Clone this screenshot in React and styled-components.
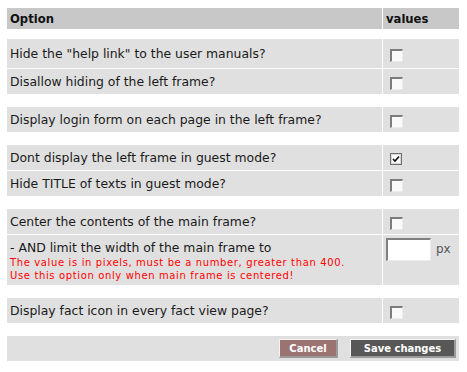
import React from "react";
import styled, { createGlobalStyle } from "styled-components";

const Global = createGlobalStyle`
  html, body { margin: 0; padding: 0; background: #ffffff; }
  body { font-family: "DejaVu Sans", Verdana, sans-serif; color: #1a1a1a; }
`;

const Page = styled.div`
  padding: 8px 0 0 7px;
  width: 452px;
  display: flex;
  flex-direction: column;
`;

const Grid = styled.div`
  display: grid;
  grid-template-columns: 375px 76px;
  column-gap: 1px;
  row-gap: 1px;
  margin-top: ${(p) => p.$gap || 0}px;
`;

const HeadCell = styled.div`
  background: #c8c8c8;
  height: 21px;
  display: flex;
  align-items: center;
  padding-left: 3px;
  font-weight: bold;
  font-size: 11.6px;
  color: #111;
`;

const Label = styled.div`
  background: #e0e0e0;
  height: ${(p) => p.$h || 25}px;
  box-sizing: border-box;
  padding-left: 3px;
  display: flex;
  flex-direction: column;
  justify-content: ${(p) => (p.$top ? "flex-start" : "center")};
  padding-top: ${(p) => (p.$top ? 5 : 0)}px;
  font-size: 12.4px;
  color: #1a1a1a;
`;

const Value = styled.div`
  background: #e0e0e0;
  height: ${(p) => p.$h || 25}px;
  box-sizing: border-box;
  display: flex;
  align-items: ${(p) => (p.$top ? "flex-start" : "center")};
  padding-top: ${(p) => (p.$top ? 3 : 1)}px;
  padding-left: ${(p) => (p.$pl ?? 7)}px;
  font-size: 12px;
`;

const Box = styled.span`
  display: inline-block;
  box-sizing: border-box;
  width: 13px;
  height: 13px;
  background: #fafafa;
  border-top: 2px solid #7c7c7c;
  border-left: 2px solid #7c7c7c;
  border-right: 1px solid #ececec;
  border-bottom: 1px solid #ececec;
  margin-top: 2px;
`;

const CheckedBox = styled.span`
  display: inline-flex;
  align-items: center;
  justify-content: center;
  box-sizing: border-box;
  width: 12px;
  height: 12px;
  background: #fafafa;
  border: 1px solid #6e6e6e;
  box-shadow: inset 0 0 0 1px #d8d8d8;
  margin-top: 2px;
`;

const Warn = styled.div`
  color: #ff0000;
  font-size: 10px;
  letter-spacing: 0.63px;
  line-height: 13px;
`;

const Main = styled.div`
  line-height: 15px;
  margin-bottom: 1px;
`;

const TextInput = styled.input`
  box-sizing: border-box;
  width: 45px;
  height: 23px;
  margin: 0;
  padding: 0 2px;
  background: #ffffff;
  border-top: 2px solid #808080;
  border-left: 2px solid #808080;
  border-right: 1px solid #ececec;
  border-bottom: 1px solid #ececec;
  outline: none;
`;

const Unit = styled.span`
  margin-left: 5px;
  color: #555555;
  font-size: 12px;
  margin-top: 4px;
`;

const Footer = styled.div`
  margin-top: 13px;
  background: #e0e0e0;
  height: 25px;
  display: flex;
  justify-content: flex-end;
  align-items: center;
  gap: 12px;
  padding-right: 3px;
`;

const Button = styled.button`
  box-sizing: border-box;
  height: 19px;
  width: ${(p) => p.$w}px;
  margin: 0;
  padding: 0;
  background: ${(p) => p.$bg};
  color: #ffffff;
  font-family: "DejaVu Sans", Verdana, sans-serif;
  font-weight: bold;
  font-size: 10px;
  border-top: 1px solid #f4f4f4;
  border-left: 1px solid #f4f4f4;
  border-right: 2px solid #9a9a9a;
  border-bottom: 2px solid #9a9a9a;
`;

const Check = () => (
  <svg width="8" height="8" viewBox="0 0 8 8">
    <path d="M1 4 L3 6 L7 1.5" stroke="#111" strokeWidth="1.6" fill="none" />
  </svg>
);

const Row = ({ label, checked, h }) => (
  <>
    <Label $h={h}>{label}</Label>
    <Value $h={h}>{checked ? <CheckedBox><Check /></CheckedBox> : <Box />}</Value>
  </>
);

export default function App() {
  return (
    <>
      <Global />
      <Page>
        <Grid>
          <HeadCell>Option</HeadCell>
          <HeadCell>values</HeadCell>
        </Grid>
        <Grid $gap={10}>
          <Row h={29} label={'Hide the "help link" to the user manuals?'} />
          <Row label="Disallow hiding of the left frame?" />
        </Grid>
        <Grid $gap={13}>
          <Row label="Display login form on each page in the left frame?" />
        </Grid>
        <Grid $gap={13}>
          <Row label="Dont display the left frame in guest mode?" checked />
          <Row label="Hide TITLE of texts in guest mode?" />
        </Grid>
        <Grid $gap={13}>
          <Row label="Center the contents of the main frame?" />
          <Label $h={50} $top>
            <Main>- AND limit the width of the main frame to</Main>
            <Warn>The value is in pixels, must be a number, greater than 400.</Warn>
            <Warn>Use this option only when main frame is centered!</Warn>
          </Label>
          <Value $h={50} $top $pl={3}>
            <TextInput type="text" defaultValue="" />
            <Unit>px</Unit>
          </Value>
        </Grid>
        <Grid $gap={13}>
          <Row label="Display fact icon in every fact view page?" />
        </Grid>
        <Footer>
          <Button $w={59} $bg="#9b7373">Cancel</Button>
          <Button $w={106} $bg="#575757">Save changes</Button>
        </Footer>
      </Page>
    </>
  );
}
